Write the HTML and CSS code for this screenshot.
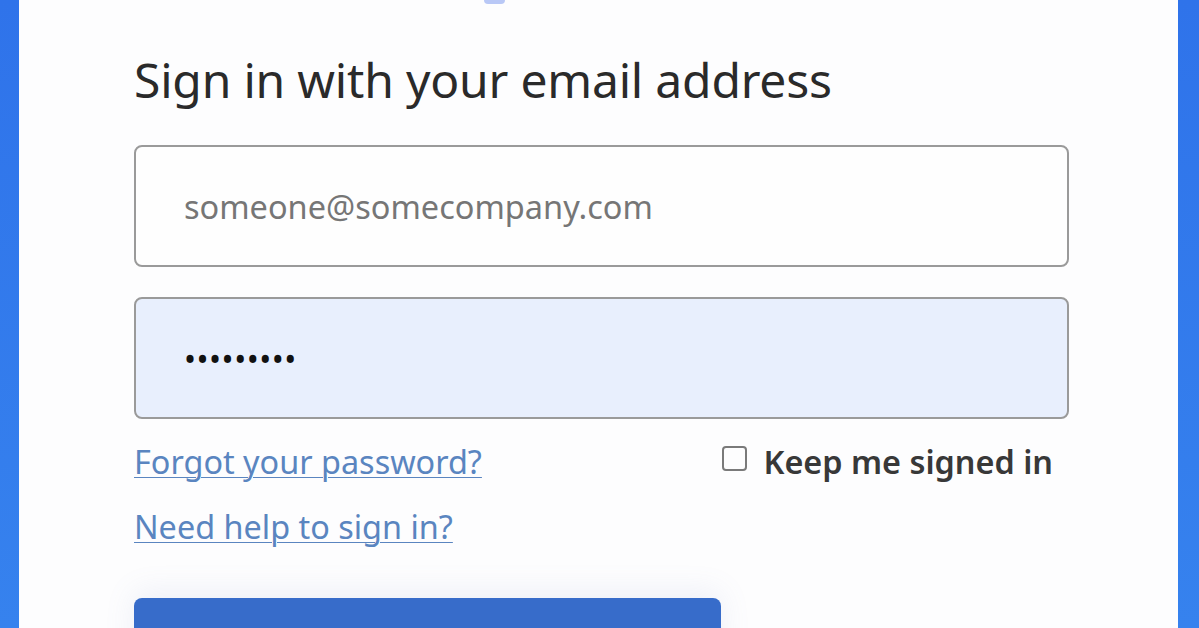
FILE: index.html
```html
<!DOCTYPE html>
<html lang="en">
<head>
<meta charset="utf-8">
<title>Sign in</title>
<link rel="stylesheet" href="styles.css">
</head>
<body>
<div class="frame">
  <div class="edge edge-left"></div>
  <main class="card">
    <div class="logo-stub"></div>
    <form class="form">
      <h1 class="title">Sign in with your email address</h1>
      <div class="field"><span class="placeholder">someone@somecompany.com</span></div>
      <div class="field field-filled"><span class="dots">&bull;&bull;&bull;&bull;&bull;&bull;&bull;&bull;&bull;</span></div>
      <div class="row">
        <a class="link" href="#">Forgot your password?</a>
        <label class="keep"><span class="box"></span>Keep me signed in</label>
      </div>
      <a class="link link-help" href="#">Need help to sign in?</a>
      <div class="btn">Sign in</div>
    </form>
  </main>
  <div class="edge edge-right"></div>
</div>
</body>
</html>
```

FILE: styles.css
```css
html, body {
  margin: 0;
  height: 100%;
  overflow: hidden;
  background: #fdfdfe;
}
.frame {
  display: flex;
  height: 628px;
  overflow: hidden;
}
.edge {
  background: linear-gradient(180deg, #2f73ea 0%, #3682ee 100%);
}
.edge-left { width: 19px; }
.edge-right { width: 21px; }
.card {
  flex: 1;
  background: #fdfdfe;
  font-family: "Noto Sans", "Open Sans", sans-serif;
}
.logo-stub {
  width: 21px;
  height: 4px;
  margin-left: 465px;
  background: #b9c8f6;
  border-radius: 0 0 4px 4px;
}
.form {
  width: 935px;
  margin-left: 115px;
}
.title {
  margin: 48px 0 0;
  font-size: 48px;
  line-height: 56px;
  font-weight: 400;
  color: #2a2a2a;
  letter-spacing: -0.2px;
}
.field {
  box-sizing: border-box;
  height: 122px;
  margin-top: 37px;
  border: 2px solid #9a9a9a;
  border-radius: 8px;
  background: #fefefe;
  display: flex;
  align-items: center;
  padding-left: 48px;
}
.field-filled {
  margin-top: 30px;
  background: #e8effd;
}
.placeholder {
  font-size: 32.5px;
  color: #767676;
}
.dots {
  font-size: 32px;
  color: #111;
  letter-spacing: 0.5px;
}
.row {
  display: flex;
  justify-content: space-between;
  align-items: center;
  margin-top: 22px;
  padding-right: 16px;
}
.link {
  font-size: 32.4px;
  line-height: 40px;
  color: #5a85c0;
  text-decoration: underline;
  text-decoration-thickness: 1px;
  text-underline-offset: 3px;
}
.link-help {
  display: inline-block;
  margin-top: 25px;
}
.keep {
  display: flex;
  align-items: center;
  font-size: 32.4px;
  line-height: 40px;
  font-weight: 600;
  color: #383838;
}
.box {
  width: 25px;
  height: 25px;
  box-sizing: border-box;
  border: 2px solid #7a7a7a;
  border-radius: 4px;
  margin-right: 16px;
  margin-top: -6px;
}
.btn {
  margin-top: 52px;
  width: 587px;
  height: 80px;
  border-radius: 8px;
  background: #376cca;
  box-shadow: 0 -6px 30px rgba(120, 140, 200, 0.12);
  color: #e9effb;
  font-size: 30px;
  text-align: center;
  padding-top: 30px;
  box-sizing: border-box;
}
```
